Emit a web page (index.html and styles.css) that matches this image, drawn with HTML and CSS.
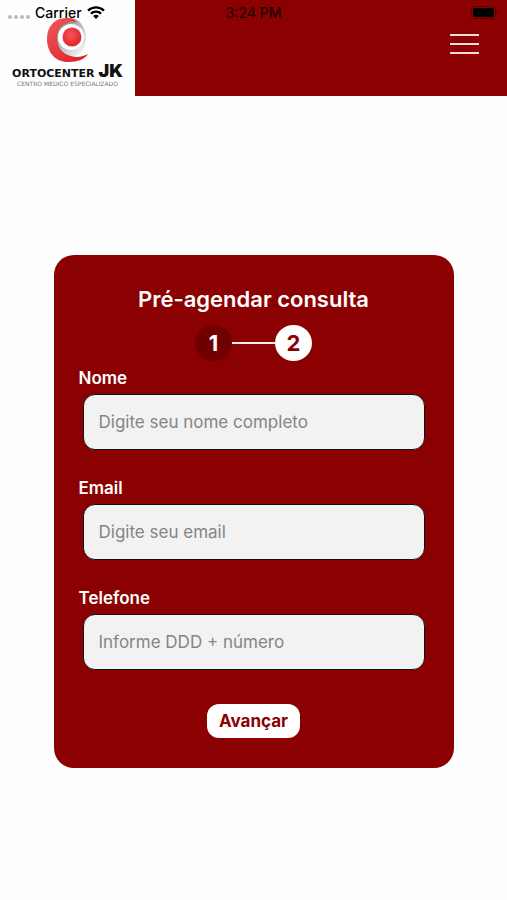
FILE: index.html
```html
<!DOCTYPE html>
<html lang="pt-BR">
<head>
<meta charset="utf-8">
<meta name="viewport" content="width=device-width, initial-scale=1">
<title>Pré-agendar consulta</title>
<link rel="stylesheet" href="styles.css">
</head>
<body>
<div class="status-bar">
  <div class="carrier">
    <span class="signal"><i></i><i></i><i></i><i></i></span>
    <span>Carrier</span>
    <svg class="wifi" viewBox="0 0 18 13" aria-hidden="true">
      <path d="M1 4.6a11.6 11.6 0 0 1 16 0M3.9 7.6a7.4 7.4 0 0 1 10.2 0" fill="none" stroke="#000" stroke-width="2.3"/>
      <path d="M9 13 6.2 10.1a4 4 0 0 1 5.6 0z"/>
    </svg>
  </div>
  <span class="time">3:24 PM</span>
  <svg class="battery" viewBox="0 0 28 13" aria-hidden="true">
    <rect x=".5" y=".5" width="24" height="12" rx="3.5" fill="none" stroke="#5c0000"/>
    <rect x="2" y="2" width="21" height="9" rx="2"/>
    <path d="M26 4.5c2 .6 2 3.4 0 4z" fill="#5c0000"/>
  </svg>
</div>
<header class="header">
  <a class="logo" href="#">
    <svg class="logo-mark" viewBox="0 0 44 46" aria-hidden="true">
      <defs>
        <linearGradient id="red" x1="0" y1="0" x2="1" y2="1">
          <stop offset="0" stop-color="#f0585a"/><stop offset="1" stop-color="#dc1c22"/>
        </linearGradient>
        <linearGradient id="gray" x1="0" y1="0" x2=".9" y2="1">
          <stop offset="0" stop-color="#666"/><stop offset=".5" stop-color="#bbb"/><stop offset="1" stop-color="#fefefe"/>
        </linearGradient>
        <radialGradient id="ball" cx=".45" cy=".4" r=".6">
          <stop offset="0" stop-color="#f5575a"/><stop offset="1" stop-color="#df2329"/>
        </radialGradient>
      </defs>
      <ellipse cx="24" cy="21" rx="16" ry="20" fill="url(#gray)"/>
      <path d="M22 1C9 0 1 9 1 22c0 14 9 23 21 23 10 0 17-3 20-8-6 3-12 4-17 2-9-2-14-9-14-18 0-8 4-13 10-15 4-2 7-1 10 0C29 2 26 1 22 1z" fill="url(#red)"/>
      <circle cx="25" cy="20" r="13" fill="#fefefe"/>
      <circle cx="26" cy="20" r="9.5" fill="url(#ball)"/>
    </svg>
    <span class="logo-name"><span>ORTOCENTER</span><strong>JK</strong></span>
    <span class="logo-tagline">CENTRO MEDICO ESPECIALIZADO</span>
  </a>
  <button class="menu" type="button" aria-label="Menu"><i></i><i></i><i></i></button>
</header>
<main class="main">
  <form class="card">
    <h1>Pré-agendar consulta</h1>
    <div class="steps">
      <span class="step">1</span>
      <span class="step-line"></span>
      <span class="step current">2</span>
    </div>
    <div class="field">
      <label for="nome">Nome</label>
      <input id="nome" type="text" placeholder="Digite seu nome completo">
    </div>
    <div class="field">
      <label for="email">Email</label>
      <input id="email" type="email" placeholder="Digite seu email">
    </div>
    <div class="field">
      <label for="telefone">Telefone</label>
      <input id="telefone" type="tel" placeholder="Informe DDD + número">
    </div>
    <button class="submit" type="button">Avançar</button>
  </form>
</main>
</body>
</html>
```
FILE: styles.css
```css
* {
  box-sizing: border-box;
}

body {
  margin: 0;
  min-height: 100vh;
  display: flex;
  flex-direction: column;
  background: #fefefe;
  font-family: Inter, "Liberation Sans", sans-serif;
}

.status-bar {
  position: absolute;
  top: 0;
  left: 0;
  right: 0;
  z-index: 1;
  height: 25px;
  padding: 0 8px;
  display: grid;
  grid-template-columns: 1fr auto 1fr;
  align-items: center;
  font-size: 14px;
  font-weight: 500;
  line-height: 17px;
  color: #000;
}

.time {
  color: #250000;
}

.carrier {
  display: flex;
  align-items: center;
  gap: 5px;
}

.signal {
  display: flex;
  gap: 2px;
  padding-top: 8px;
}

.signal i {
  width: 4px;
  height: 4px;
  border-radius: 50%;
  background: #bbb;
}

.wifi {
  width: 18px;
  height: 13px;
}

.battery {
  width: 28px;
  height: 13px;
  justify-self: end;
}

.header {
  height: 96px;
  display: flex;
  justify-content: space-between;
  align-items: flex-start;
  background: #8b0000;
}

.logo {
  width: 135px;
  height: 96px;
  padding-top: 17px;
  display: flex;
  flex-direction: column;
  align-items: center;
  background: #fefefe;
  color: #111;
  text-decoration: none;
}

.logo-mark {
  width: 44px;
  height: 46px;
}

.logo-name {
  display: flex;
  align-items: baseline;
  gap: 4px;
  font-family: "DejaVu Sans", sans-serif;
  font-size: 11px;
  font-weight: 700;
  line-height: 16px;
}

.logo-name strong {
  font-family: Inter, sans-serif;
  font-size: 18px;
}

.logo-tagline {
  font-family: "DejaVu Sans", sans-serif;
  font-size: 6px;
  line-height: 4px;
  color: #777;
  white-space: nowrap;
}

.menu {
  margin: 34px 28px 0 0;
  padding: 0;
  width: 29px;
  display: flex;
  flex-direction: column;
  gap: 7px;
  border: 0;
  background: none;
}

.menu i {
  height: 2px;
  background: #f3dcdc;
}

.main {
  flex: 1;
  display: flex;
  justify-content: center;
  align-items: center;
  padding: 27px 24px 0;
}

.card {
  width: 100%;
  max-width: 400px;
  padding: 30px 25px;
  display: flex;
  flex-direction: column;
  border-radius: 20px;
  background: #8b0000;
  color: #fff;
}

h1 {
  margin: 0 0 12px;
  font-size: 22px;
  font-weight: 600;
  line-height: 28px;
  text-align: center;
}

.steps {
  display: flex;
  justify-content: center;
  align-items: center;
  margin-bottom: 7px;
}

.step {
  width: 37px;
  height: 36px;
  border-radius: 50%;
  background: #700000;
  font-size: 22px;
  font-weight: 700;
  line-height: 36px;
  text-align: center;
}

.step.current {
  background: #fff;
  color: #8b0000;
}

.step-line {
  width: 43px;
  height: 2px;
  background: #fbeaea;
}

.field {
  display: flex;
  flex-direction: column;
  gap: 6px;
  margin-bottom: 29px;
}

.field label {
  font-size: 17px;
  font-weight: 600;
  line-height: 20px;
}

.field input {
  height: 56px;
  margin: 0 4px -1px;
  padding: 0 15px;
  border: 1px solid #111;
  border-radius: 12px;
  background: #f2f2f2;
  font-family: inherit;
  font-size: 17px;
  color: #222;
}

.field input::placeholder {
  color: #858585;
}

.submit {
  align-self: center;
  height: 34px;
  margin-top: 6px;
  padding: 0 12px;
  border: 0;
  border-radius: 12px;
  background: #fff;
  color: #8b0000;
  font-family: inherit;
  font-size: 17px;
  font-weight: 700;
}
```
